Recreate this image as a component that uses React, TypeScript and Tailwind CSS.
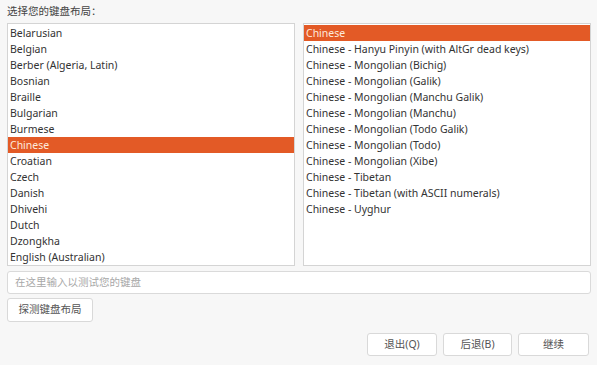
import React from "react";

const layouts = [
  "Belarusian",
  "Belgian",
  "Berber (Algeria, Latin)",
  "Bosnian",
  "Braille",
  "Bulgarian",
  "Burmese",
  "Chinese",
  "Croatian",
  "Czech",
  "Danish",
  "Dhivehi",
  "Dutch",
  "Dzongkha",
  "English (Australian)",
];

const variants = [
  "Chinese",
  "Chinese - Hanyu Pinyin (with AltGr dead keys)",
  "Chinese - Mongolian (Bichig)",
  "Chinese - Mongolian (Galik)",
  "Chinese - Mongolian (Manchu Galik)",
  "Chinese - Mongolian (Manchu)",
  "Chinese - Mongolian (Todo Galik)",
  "Chinese - Mongolian (Todo)",
  "Chinese - Mongolian (Xibe)",
  "Chinese - Tibetan",
  "Chinese - Tibetan (with ASCII numerals)",
  "Chinese - Uyghur",
];

const ListBox = ({ items, selected }: { items: string[]; selected: string }) => (
  <div className="flex-1 h-[243px] bg-white border border-[#d4d4d4] overflow-hidden py-px">
    {items.map((item) => (
      <div
        key={item}
        className={
          item === selected
            ? "h-4 leading-4 px-[2px] bg-[#e35a26] text-[#fde9dc]"
            : "h-4 leading-4 px-[2px] text-[#333]"
        }
      >
        {item}
      </div>
    ))}
  </div>
);

const Button = ({ label, className }: { label: string; className?: string }) => (
  <button
    className={
      "h-[23px] bg-white border border-[#d9d9d9] rounded-[3px] text-[#555] text-[10.5px] " +
      (className ?? "")
    }
  >
    {label}
  </button>
);

export default function App() {
  return (
    <div
      className="w-[597px] h-[365px] bg-[#f7f7f7] pl-[7px] pr-[6px] text-[10.5px] flex flex-col"
      style={{ fontFamily: '"Noto Sans", "Noto Sans CJK SC", sans-serif' }}
    >
      <div className="h-[23px] pt-[3px] text-[#444] leading-4">选择您的键盘布局：</div>
      <div className="flex gap-[8px]">
        <ListBox items={layouts} selected="Chinese" />
        <ListBox items={variants} selected="Chinese" />
      </div>
      <div className="mt-[5px] h-[23px] bg-white border border-[#dadada] rounded-[3px] px-[7px] leading-[21px] text-[#a8a8a8]">
        在这里输入以测试您的键盘
      </div>
      <div className="mt-[4px]">
        <Button label="探测键盘布局" className="w-[86px] h-[24px]" />
      </div>
      <div className="mt-[11px] flex justify-end gap-[6px] pr-[2px]">
        <Button label="退出(Q)" className="w-[70px]" />
        <Button label="后退(B)" className="w-[69px]" />
        <Button label="继续" className="w-[71px]" />
      </div>
    </div>
  );
}
